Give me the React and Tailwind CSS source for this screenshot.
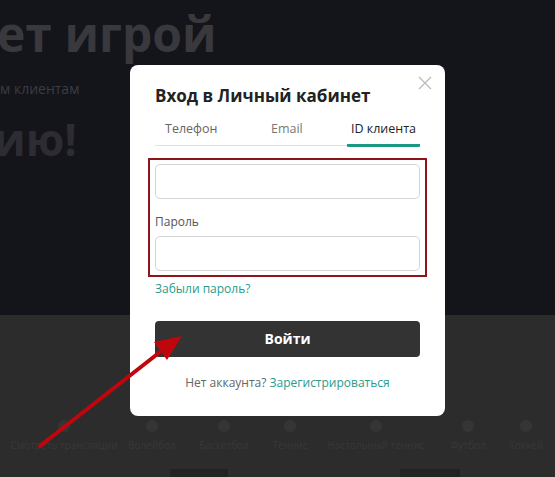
import React from 'react';

const CATEGORIES = [
    { label: 'Смотреть трансляции', w: 'w-[100px]' },
    { label: 'Волейбол', w: 'w-[48px]' },
    { label: 'Баскетбол', w: 'w-[68px]' },
    { label: 'Теннис', w: 'w-[36px]' },
    { label: 'Настольный теннис', w: 'w-[108px]' },
    { label: 'Футбол', w: 'w-[48px]' },
    { label: 'Хоккей', w: 'w-[40px]' },
];

function Backdrop() {
    return (
        <div className="absolute inset-0 flex flex-col">
            <div className="h-[316px] bg-[#14141b] overflow-hidden pt-[4px]">
                <div className="text-[48px] font-bold leading-[60px] text-[#38383d] -ml-[3px] whitespace-nowrap">ет игрой</div>
                <div className="mt-[14px] text-[14px] text-[#3c3c42] whitespace-nowrap">м клиентам</div>
                <div className="mt-[14px] text-[44px] font-bold leading-[52px] text-[#2c2c32] -ml-[6px]">ию!</div>
            </div>
            <div className="flex-1 bg-[#2c2c2c]">
                <div className="mt-[105px] flex gap-[14px] pl-[14px] whitespace-nowrap">
                    {CATEGORIES.map(c => (
                        <div key={c.label} className={`flex flex-col items-center ${c.w} shrink-0`}>
                            <div className="w-[12px] h-[12px] rounded-full bg-[#353535]" />
                            <div className="mt-[6px] text-[10px] text-[#383838]">{c.label}</div>
                        </div>
                    ))}
                </div>
                <div className="mt-[16px] flex gap-[172px] pl-[170px]">
                    <div className="w-[58px] h-[8px] bg-[#222]" />
                    <div className="w-[60px] h-[8px] bg-[#222]" />
                </div>
            </div>
        </div>
    );
}

function Arrow() {
    return (
        <svg className="absolute inset-0 pointer-events-none" width="555" height="477" viewBox="0 0 555 477">
            <line x1="40" y1="446" x2="160" y2="352" stroke="#c0060d" strokeWidth="4" strokeLinecap="round" />
            <polygon points="182,336 154,342 167,360" fill="#c0060d" />
        </svg>
    );
}

export default function App() {
    return (
        <div className="relative w-[555px] h-[477px] overflow-hidden" style={{ fontFamily: '"Open Sans", "Noto Sans", sans-serif' }}>
            <Backdrop />

            <div className="absolute left-[130px] top-[65px] w-[315px] h-[351px] bg-white rounded-[8px] px-[25px] pt-[20px]">
                <button className="absolute right-[13px] top-[11px] text-[#bbbbbb]">
                    <svg width="14" height="14" viewBox="0 0 14 14">
                        <path d="M1 1 L13 13 M13 1 L1 13" stroke="currentColor" strokeWidth="1.3" />
                    </svg>
                </button>

                <h2 className="text-[17px] font-bold text-[#222] leading-[22px]">Вход в Личный кабинет</h2>

                <div className="mt-[13px] flex border-b border-[#e2e2e2] text-[12.5px]">
                    <div className="w-[95px] pl-[10px] pb-[5px] text-[#666]">Телефон</div>
                    <div className="w-[97px] pl-[21px] pb-[5px] text-[#777]">Email</div>
                    <div className="flex-1 text-center pb-[5px] text-[#222] border-b-[3px] border-[#1a9882] -mb-[2px] rounded-[1px]">ID клиента</div>
                </div>

                <div className="mt-[18px]">
                    <input className="w-full h-[35px] border border-[#d4d4d4] rounded-[5px] outline-none px-3 text-[13px]" />
                    <div className="mt-[14px] text-[12px] text-[#555]">Пароль</div>
                    <input type="password" className="mt-[5px] w-full h-[35px] border border-[#d4d4d4] rounded-[5px] outline-none px-3 text-[13px]" />
                </div>

                <div className="mt-[9px] text-[12px] text-[#2a9a8a]">Забыли пароль?</div>

                <button className="mt-[23px] w-full h-[36px] bg-[#333333] rounded-[4px] text-white text-[14px] font-bold">Войти</button>

                <div className="mt-[17px] text-center text-[12px] text-[#666]">
                    Нет аккаунта? <span className="text-[#2a9a8a]">Зарегистрироваться</span>
                </div>
            </div>

            <div className="absolute left-[148px] top-[158px] w-[279px] h-[119px] border-2 border-[#8b1518] pointer-events-none" />

            <Arrow />
        </div>
    );
}
